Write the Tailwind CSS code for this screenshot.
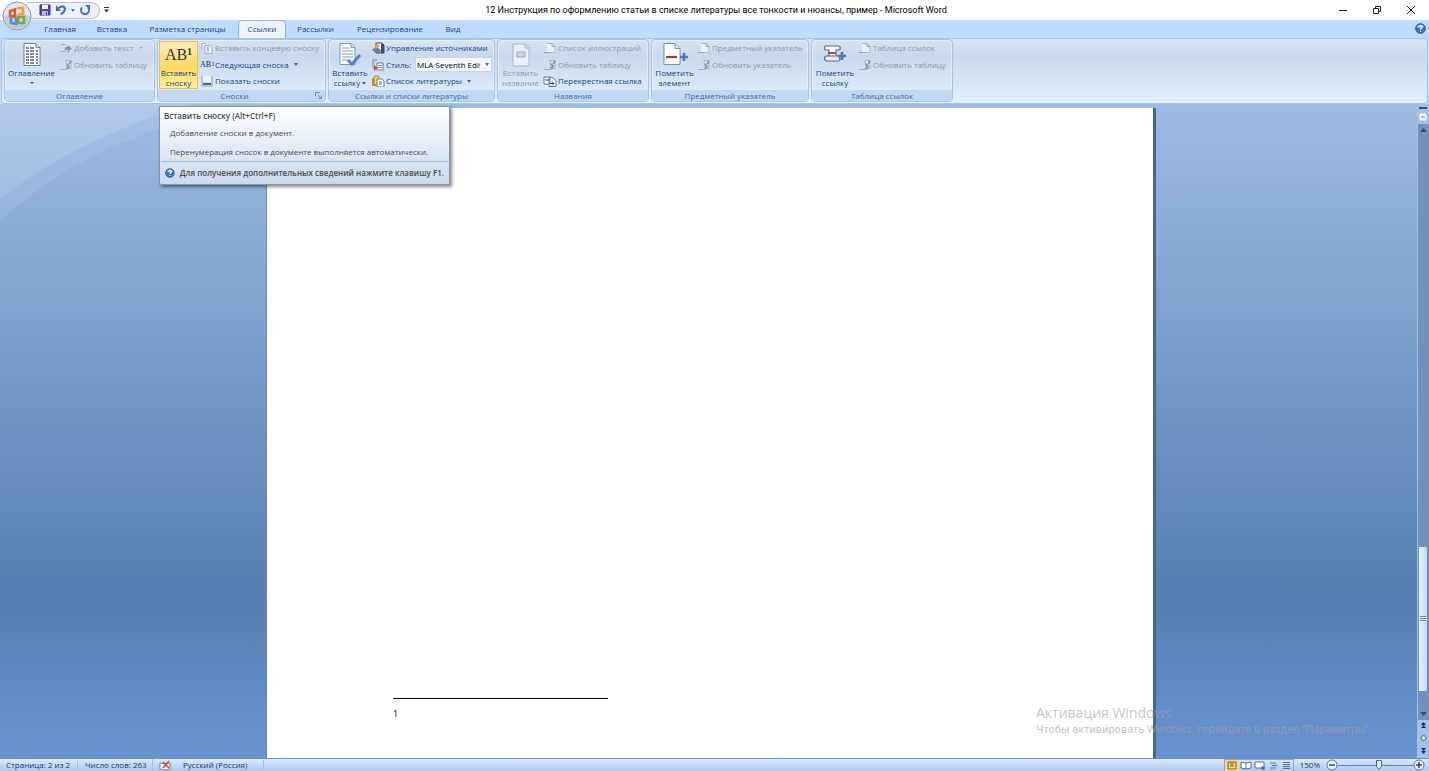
<!DOCTYPE html>
<html lang="ru">
<head>
<meta charset="utf-8">
<title>12 Инструкция - Microsoft Word</title>
<script src="https://cdn.jsdelivr.net/npm/@tailwindcss/browser@4"></script>
</head>
<body class="relative flex h-screen flex-col overflow-hidden bg-[#bfdbff] font-['Open_Sans','Noto_Sans',sans-serif] text-[8px] leading-[10px] text-[#15428b]">
<svg class="hidden">
  <defs>
    <symbol id="i-toc" viewBox="0 0 24 26"><path d="M4 1.500h12l4 4v18H4z" fill="#fff" stroke="#71819b"/><path d="M16 1.500v4h4" fill="#dbe5f2" stroke="#71819b"/><path d="M6 6h3M10 6h4M6 9h3M10 9h4M6 12h3M10 12h4M6 15h3M10 15h4M6 18h3M10 18h4M6 21h3M10 21h4M16 9h2M16 12h2M16 15h2M16 18h2M16 21h2" stroke="#53657f" stroke-width="1.300"/></symbol>
    <symbol id="i-add" viewBox="0 0 14 12"><path d="M1 9.500h5M2 2.500h5l2 2M6 6v4h4" fill="none" stroke="#a3b0c4"/><path d="M6 5h3V3l4 3.500L9 10V8H6z" fill="#8795ab"/></symbol>
    <symbol id="i-upd" viewBox="0 0 14 12"><path d="M1 10.500h7M7 1.500h5v8H8z" fill="#dce5f1" stroke="#a3b0c4"/><path d="M8 10l2-3-2-2M10 5l2-3" fill="none" stroke="#7f8da4" stroke-width="1.500"/></symbol>
    <symbol id="i-end" viewBox="0 0 14 12"><path d="M2 8V1.500h4M5 3.500h5l2 2v6H5z" fill="#eaf0f8" stroke="#a0aec3"/><path d="M8 5v5M7 6h1" stroke="#8090a8"/></symbol>
    <symbol id="i-bar" viewBox="0 0 14 12"><path d="M2 1h10v10H2z" fill="#edf3fb"/><path d="M2 1v10h10V1" fill="none" stroke="#8797b4"/><path d="M3 7h8v3H3z" fill="#c7cfe0"/><path d="M3 9h8" stroke="#38466e" stroke-width="1.500"/></symbol>
    <symbol id="i-cite" viewBox="0 0 24 26"><path d="M2 1.500h11l4 4v17H2z" fill="#f8fbff" stroke="#8395b0"/><path d="M13 1.500v4h4M4 6h7M4 9h11M4 12h11M4 15h11M4 18h7" fill="none" stroke="#8c9bb4"/><path d="M10 18l4 4 8-9" fill="none" stroke="#4f87cb" stroke-width="3"/></symbol>
    <symbol id="i-src" viewBox="0 0 14 12"><path d="M5 1h6l2 2v8H5z" fill="#eef3fb" stroke="#3d4a68"/><path d="M10 2h3v9h-3z" fill="#3d4a68"/><path d="M2 7l5-5 2 2-5 5z" fill="#e9a83b"/><path d="M1 7l3 4h5l2-2-4-3z" fill="#6d7fa1"/></symbol>
    <symbol id="i-style" viewBox="0 0 14 12"><path d="M2 1v8h3M2 1h4" fill="none" stroke="#7888a5"/><path d="M6 4h6v7H6z" fill="#fff" stroke="#66799b"/><path d="M7 6.500h4M7 8.500h4" stroke="#7f8fac"/><path d="M3 6l4 3-4 3z" fill="#d14f36"/></symbol>
    <symbol id="i-bib" viewBox="0 0 14 12"><path d="M1 3h4v8H1z" fill="#cb8e34"/><path d="M3 1h5v9H3z" fill="#f2c55f" stroke="#97691f" stroke-width=".6"/><path d="M6 4h5l2 2v6H6z" fill="#fff" stroke="#6c80a3"/><path d="M8 7h3M8 9h3" stroke="#526b99"/></symbol>
    <symbol id="i-cap" viewBox="0 0 24 26"><path d="M4 2h12l4 4v18H4z" fill="#e9f0f9" stroke="#a9b8cd"/><path d="M16 2v4h4" fill="none" stroke="#a9b8cd"/><path d="M8 10h8v5H8z" fill="#cbd5e4" stroke="#9dadc4"/></symbol>
    <symbol id="i-list" viewBox="0 0 14 12"><path d="M4 1.500h5l3 2.500v6.500H4" fill="#eaf0f8" stroke="#aab7ca"/><path d="M1 10.500h6M9 1.500v3h3" fill="none" stroke="#98a6bc"/></symbol>
    <symbol id="i-cross" viewBox="0 0 14 12"><path d="M1 2h6v7H1zM6 2.500h4l3 3v6H6z" fill="#fff" stroke="#65789e"/><path d="M3 4v2M5 4v2" stroke="#354d80"/><path d="M7 8.500h4M9 6.500l2 2-2 2" fill="none" stroke="#354d80"/></symbol>
    <symbol id="i-mark" viewBox="0 0 28 26"><path d="M3 1.500h11l5 5v16H3z" fill="#fff" stroke="#7a8eac"/><path d="M14 1.500v5h5" fill="#d6e2f2" stroke="#7a8eac"/><path d="M5 15h11" stroke="#ad3526" stroke-width="2.200"/><path d="M19 15h8M23 11v8" stroke="#4d73b8" stroke-width="2.600"/></symbol>
    <symbol id="i-auth" viewBox="0 0 28 26"><path d="M5 4h12c3 0 3 4 0 4h-2v9H8V8H5c-2 0-2-4 0-4z" fill="#fff" stroke="#596a88" stroke-width="1.200"/><path d="M7 11h8" stroke="#c4482f" stroke-width="2"/><path d="M5 14h12c2 0 3 5 0 5H6c-3 0-3-5-1-5z" fill="#e6ecf5" stroke="#596a88" stroke-width="1.200"/><path d="M17 14h8M21 10v8" stroke="#4d73b8" stroke-width="2.600"/></symbol>
    <symbol id="i-help" viewBox="0 0 12 12"><circle cx="6" cy="6" r="5.300" fill="#3f74cc" stroke="#254f9c"/><path d="M2 4.500a4.300 4.300 0 0 1 8 0q-4 2-8 0" fill="#89b2ee"/><path d="M4.300 4.700c0-2.500 3.600-2.200 3.400-.1C7.600 5.800 6 5.800 6 7.200M6 8.500v1.200" fill="none" stroke="#fff" stroke-width="1.300"/></symbol>
  </defs>
</svg>

<!-- Title bar -->
<header class="flex h-5 shrink-0 items-center bg-white pr-[13px] text-black">
  <div class="ml-7 flex h-[17px] w-[72px] items-center gap-1 rounded-r-full border border-l-0 border-[#b3bfd4] bg-[#eef2fb] pl-[11px]">
    <button aria-label="Сохранить"><svg class="size-3" viewBox="0 0 12 12"><path d="M1 1h10v10H1z" fill="#4b4ba4" stroke="#34347f"/><path d="M3 1h6v4H3z" fill="#eef0ff"/><path d="M3 7h6v4H3z" fill="#b8bce2"/><path d="M7 8h1v3H7z" fill="#34347f"/></svg></button>
    <button aria-label="Отменить"><svg class="size-3" viewBox="0 0 12 12"><path d="M3 4.500c4-4 8-2 6.500 2C9 8.500 7 9 6 10.500" fill="none" stroke="#3f6fc1" stroke-width="2.200"/><path d="M1 1v6h5z" fill="#3f6fc1"/></svg></button>
    <svg class="h-[3px] w-1" viewBox="0 0 4 3"><path d="M0 0h4L2 3z" fill="#56719f"/></svg>
    <button aria-label="Повторить"><svg class="size-3" viewBox="0 0 12 12"><path d="M3 3.500a4 4 0 1 0 6 0" fill="none" stroke="#3f6fc1" stroke-width="2"/><path d="M6 1h5v5z" fill="#3f6fc1"/></svg></button>
  </div>
  <button aria-label="Настройка панели" class="ml-1"><svg class="h-[6px] w-[5px]" viewBox="0 0 5 6"><path d="M0 .500h5" stroke="#333"/><path d="M0 2.500h5L2.500 5.500z" fill="#333"/></svg></button>
  <h1 class="grow pr-[15px] text-center font-[Roboto,sans-serif] text-[9px] whitespace-nowrap">12 Инструкция по оформлению статьи в списке литературы все тонкости и нюансы, пример - Microsoft Word</h1>
  <div class="flex items-center gap-6">
    <button aria-label="Свернуть"><svg class="size-[10px]" viewBox="0 0 10 10"><path d="M1 5.500h8" stroke="#222"/></svg></button>
    <button aria-label="Восстановить"><svg class="size-[10px]" viewBox="0 0 10 10"><path d="M1.500 3.500h5v5h-5zM3.500 3V1.500h5v5H7" fill="none" stroke="#222"/></svg></button>
    <button aria-label="Закрыть"><svg class="size-[10px]" viewBox="0 0 10 10"><path d="M1 1l8 8M9 1L1 9" stroke="#222"/></svg></button>
  </div>
</header>
<button aria-label="Кнопка Office" class="absolute top-0 left-[2px] z-10"><svg class="size-8" viewBox="0 0 32 32"><circle cx="15" cy="16" r="14" fill="#e3e8f0" stroke="#8b99b0"/><path d="M2 16a13 13 0 0 0 26 0q-13-4-26 0" fill="#c3cedd"/><g fill="none" stroke-width="2.600"><path d="M13 9.500l-5 1.500v5l5 .5z" stroke="#dc5b2b"/><path d="M15 8h6v6h-5" stroke="#ee9b2f"/><path d="M9 17v6l5 1v-6" stroke="#5a8ed1"/><path d="M16 17h6v6h-6z" stroke="#74a84b"/></g></svg></button>

<!-- Tabs -->
<nav class="flex h-[18px] shrink-0 items-end pr-[3px] pl-[33px]">
  <button class="h-[18px] w-[54px] pb-px">Главная</button>
  <button class="h-[18px] w-[50px] pb-px">Вставка</button>
  <button class="h-[18px] w-[101px] pb-px">Разметка страницы</button>
  <button class="h-[18px] w-[48px] rounded-t-sm border border-b-0 border-[#8db2e3] bg-[#ebf3fd] pb-px">Ссылки</button>
  <button class="h-[18px] w-[59px] pb-px">Рассылки</button>
  <button class="h-[18px] w-[90px] pb-px">Рецензирование</button>
  <button class="h-[18px] w-[36px] pb-px">Вид</button>
  <button aria-label="Справка" class="mb-1 ml-auto"><svg class="size-[11px]"><use href="#i-help"/></svg></button>
</nav>

<!-- Ribbon -->
<section class="mx-px flex h-[66px] shrink-0 gap-[2px] rounded-sm border border-[#a5c3e8] bg-linear-to-b from-[#dbe5f2] from-0% via-[#c8d8ed] via-25% to-[#e3f1fe] px-[2px] pb-px whitespace-nowrap">
  <div class="flex w-[151px] flex-col rounded-sm border border-[#a9c5e6] shadow-[inset_0_0_0_1px_#ffffff66]">
    <div class="flex grow">
      <button class="flex w-[54px] flex-col items-center pt-[2px] pr-px"><svg class="h-[26px] w-6"><use href="#i-toc"/></svg><span>Оглавление</span><svg class="mt-1 h-[2px] w-1" viewBox="0 0 4 2"><path d="M0 0h4L2 2z" fill="#46669a"/></svg></button>
      <div class="flex flex-col text-[#8d98aa]">
        <button class="flex h-4 items-center gap-px" disabled><svg class="h-3 w-[14px]"><use href="#i-add"/></svg>Добавить текст<svg class="ml-1 h-[2px] w-1" viewBox="0 0 4 2"><path d="M0 0h4L2 2z" fill="#a0abba"/></svg></button>
        <button class="flex h-[17px] items-center gap-px" disabled><svg class="h-3 w-[14px]"><use href="#i-upd"/></svg>Обновить таблицу</button>
      </div>
    </div>
    <div class="h-[11px] bg-[#c1d8f1] text-center leading-3 text-[#3e6aaa]">Оглавление</div>
  </div>
  <div class="flex w-[169px] flex-col rounded-sm border border-[#a9c5e6] shadow-[inset_0_0_0_1px_#ffffff66]">
    <div class="flex grow">
      <button class="mt-px ml-px flex h-[48px] w-[39px] flex-col items-center justify-end border border-[#e0bd68] bg-linear-to-b from-[#fdeab3] via-[#ffd95a] via-55% to-[#fff09a]"><span class="mb-[3px] flex items-start font-['Liberation_Serif',serif] text-[16px] leading-5 text-[#2c3345]">AB<span class="text-[10px] leading-[14px] font-bold">1</span></span><span>Вставить</span><span>сноску</span></button>
      <div class="flex flex-col pl-[2px]">
        <button class="flex h-4 items-center gap-px text-[#8d98aa]" disabled><svg class="h-3 w-[14px]"><use href="#i-end"/></svg>Вставить концевую сноску</button>
        <button class="flex h-[17px] items-center gap-px"><span class="flex w-[14px] items-start font-['Liberation_Serif',serif] text-[8px] text-[#222f52]">AB<span class="text-[7px] leading-[8px]">1</span></span>Следующая сноска<svg class="ml-1 h-[3px] w-1" viewBox="0 0 4 3"><path d="M0 0h4L2 3z" fill="#46669a"/></svg></button>
        <button class="flex h-4 items-center gap-px"><svg class="h-3 w-[14px]"><use href="#i-bar"/></svg>Показать сноски</button>
      </div>
    </div>
    <div class="flex h-[11px] items-center bg-[#c1d8f1] pr-[3px] text-[#3e6aaa]"><span class="grow pr-1 text-center">Сноски</span><button aria-label="Параметры сносок"><svg class="size-[7px]" viewBox="0 0 7 7"><path d="M.5 4V.5H5M3 3l3 3M6.500 3.500v3h-3" fill="none" stroke="#6c8cbb"/></svg></button></div>
  </div>
  <div class="flex w-[167px] flex-col rounded-sm border border-[#a9c5e6] shadow-[inset_0_0_0_1px_#ffffff66]">
    <div class="flex grow">
      <button class="flex w-[42px] flex-col items-center pt-[2px]"><svg class="h-[26px] w-6"><use href="#i-cite"/></svg><span>Вставить</span><span class="flex items-center gap-[2px]">ссылку<svg class="h-[3px] w-1" viewBox="0 0 4 3"><path d="M0 0h4L2 3z" fill="#46669a"/></svg></span></button>
      <div class="flex flex-col">
        <button class="flex h-4 items-center gap-px"><svg class="h-3 w-[14px]"><use href="#i-src"/></svg>Управление источниками</button>
        <div class="flex h-[17px] items-center gap-px"><svg class="h-3 w-[14px]"><use href="#i-style"/></svg><label for="style" class="w-7">Стиль:</label>
          <div class="relative flex items-center"><select id="style" class="h-[15px] w-[77px] appearance-none border border-[#c3d5ee] bg-[#f5f9ff] pr-[11px] pl-px text-black"><option>MLA Seventh Edition</option></select><svg class="pointer-events-none absolute right-[3px] h-[3px] w-1" viewBox="0 0 4 3"><path d="M0 0h4L2 3z" fill="#46669a"/></svg></div></div>
        <button class="flex h-4 items-center gap-px"><svg class="h-3 w-[14px]"><use href="#i-bib"/></svg>Список литературы<svg class="ml-1 h-[3px] w-1" viewBox="0 0 4 3"><path d="M0 0h4L2 3z" fill="#46669a"/></svg></button>
      </div>
    </div>
    <div class="h-[11px] bg-[#c1d8f1] text-center leading-3 text-[#3e6aaa]">Ссылки и списки литературы</div>
  </div>
  <div class="flex w-[152px] flex-col rounded-sm border border-[#a9c5e6] shadow-[inset_0_0_0_1px_#ffffff66]">
    <div class="flex grow">
      <button class="flex w-[45px] flex-col items-center pt-[2px] text-[#8d98aa]" disabled><svg class="h-[26px] w-6"><use href="#i-cap"/></svg><span>Вставить</span><span>название</span></button>
      <div class="flex flex-col">
        <button class="flex h-4 items-center gap-px text-[#8d98aa]" disabled><svg class="h-3 w-[14px]"><use href="#i-list"/></svg>Список иллюстраций</button>
        <button class="flex h-[17px] items-center gap-px text-[#8d98aa]" disabled><svg class="h-3 w-[14px]"><use href="#i-upd"/></svg>Обновить таблицу</button>
        <button class="flex h-4 items-center gap-px"><svg class="h-3 w-[14px]"><use href="#i-cross"/></svg>Перекрестная ссылка</button>
      </div>
    </div>
    <div class="h-[11px] bg-[#c1d8f1] text-center leading-3 text-[#3e6aaa]">Названия</div>
  </div>
  <div class="flex w-[158px] flex-col rounded-sm border border-[#a9c5e6] shadow-[inset_0_0_0_1px_#ffffff66]">
    <div class="flex grow">
      <button class="flex w-[45px] flex-col items-center pt-[2px]"><svg class="h-[26px] w-7"><use href="#i-mark"/></svg><span>Пометить</span><span>элемент</span></button>
      <div class="flex flex-col text-[#8d98aa]">
        <button class="flex h-4 items-center gap-px" disabled><svg class="h-3 w-[14px]"><use href="#i-list"/></svg>Предметный указатель</button>
        <button class="flex h-[17px] items-center gap-px" disabled><svg class="h-3 w-[14px]"><use href="#i-upd"/></svg>Обновить указатель</button>
      </div>
    </div>
    <div class="h-[11px] bg-[#c1d8f1] text-center leading-3 text-[#3e6aaa]">Предметный указатель</div>
  </div>
  <div class="flex w-[142px] flex-col rounded-sm border border-[#a9c5e6] shadow-[inset_0_0_0_1px_#ffffff66]">
    <div class="flex grow">
      <button class="flex w-[46px] flex-col items-center pt-[2px]"><svg class="h-[26px] w-7"><use href="#i-auth"/></svg><span>Пометить</span><span>ссылку</span></button>
      <div class="flex flex-col text-[#8d98aa]">
        <button class="flex h-4 items-center gap-px" disabled><svg class="h-3 w-[14px]"><use href="#i-list"/></svg>Таблица ссылок</button>
        <button class="flex h-[17px] items-center gap-px" disabled><svg class="h-3 w-[14px]"><use href="#i-upd"/></svg>Обновить таблицу</button>
      </div>
    </div>
    <div class="h-[11px] bg-[#c1d8f1] text-center leading-3 text-[#3e6aaa]">Таблица ссылок</div>
  </div>
</section>

<!-- Workspace -->
<main class="relative flex min-h-0 grow bg-linear-to-b from-[#9dbbe4] via-[#557fb2] via-75% to-[#6993d0]">
  <svg class="absolute top-0 left-0 h-[120px] w-[270px]" viewBox="0 0 270 120"><path d="M0 0h270C150 15 60 60 0 118z" fill="#fff" opacity=".09"/><path d="M0 96C45 58 100 30 190 0H0z" fill="#fff" opacity=".12"/></svg>
  <div class="relative flex grow justify-center pt-1 pl-[2px]">
    <article class="flex w-[887px] flex-col justify-end border-l border-[#6f8db8] bg-white pb-[39px] pl-[126px] text-black shadow-[3px_0_0_#4a6690]">
      <hr class="w-[215px] border-black">
      <p class="mt-[10px] text-[9px]">1</p>
    </article>
  </div>
  <aside class="relative flex w-3 flex-col items-center bg-[#a3c0e8]">
    <div class="mt-[3px] h-[2px] w-2 bg-[#35517f]"></div>
    <svg class="mt-1 size-2" viewBox="0 0 8 8"><path d="M1 1h5l1 1v5H1z" fill="#e8f1fc" stroke="#fff"/><path d="M2 4h4" stroke="#6e8ebd"/></svg>
    <div class="mt-[3px] flex w-[11px] grow flex-col items-center bg-[#7391bd] pt-1 pb-1">
      <svg class="h-1 w-[7px]" viewBox="0 0 7 4"><path d="M0 4h7L3.500 0z" fill="#2f4e80"/></svg>
      <div class="grow-[418]"></div>
      <div class="flex w-[10px] grow-[141] flex-col items-center justify-center gap-px border border-[#718db9] bg-linear-to-r from-[#edf4fd] to-[#c3d6f0]"><i class="h-px w-[6px] bg-[#6f86aa]"></i><i class="h-px w-[6px] bg-[#6f86aa]"></i><i class="h-px w-[6px] bg-[#6f86aa]"></i></div>
      <div class="grow-[20]"></div>
      <svg class="h-1 w-[7px]" viewBox="0 0 7 4"><path d="M0 0h7L3.500 4z" fill="#2f4e80"/></svg>
    </div>
    <svg class="h-[38px] w-3" viewBox="0 0 12 38"><path d="M4 5h5L6.500 2zM4 8h5L6.500 5zM4 28h5L6.500 31zM4 31h5L6.500 34z" fill="#182f55"/><path d="M6.500 15l3 3-3 3-3-3z" fill="#d7ead5" stroke="#3d5a5c"/></svg>
  </aside>
  <div class="pointer-events-none absolute right-[57px] bottom-[21px] w-[336px] font-[Roboto,sans-serif] whitespace-nowrap text-[#a0a4aa]/65"><p class="font-['Open_Sans',sans-serif] text-[14px] leading-[18px]">Активация Windows</p><p class="text-[11px] leading-[15px]">Чтобы активировать Windows, перейдите в раздел "Параметры".</p></div>
</main>

<!-- Status bar -->
<footer class="flex h-[13px] shrink-0 items-center border-t border-[#6d93c9] bg-linear-to-b from-[#dce9fa] to-[#acc8ef] pr-1 pl-[6px] whitespace-nowrap text-[#1b3666]">
  <span class="w-[71px]">Страница: 2 из 2</span>
  <span class="w-[75px] border-l border-[#a3bfe2] pl-[7px]">Число слов: 263</span>
  <span class="border-l border-[#a3bfe2] pl-[6px]"><svg class="size-3" viewBox="0 0 12 12"><path d="M1 4l5 1 5-1v6l-5 1-5-1z" fill="#fff" stroke="#7183a5"/><path d="M4 3l6 6M10 2L4 9" stroke="#d34a39" stroke-width="1.700"/></svg></span>
  <span class="mr-auto ml-3 border-r border-[#a3bfe2] pr-4">Русский (Россия)</span>
  <div class="flex items-center border border-[#86a5d1]">
    <button aria-label="Разметка страницы" class="bg-[#fbd98a]"><svg class="h-[11px] w-[14px]" viewBox="0 0 14 11"><path d="M3 2h8v7H3zM5 4h4M5 6h4" fill="none" stroke="#7a5b28"/></svg></button>
    <button aria-label="Режим чтения"><svg class="h-[11px] w-[14px]" viewBox="0 0 14 11"><path d="M2 2l5 1 5-1v6L7 9 2 8zM7 3v6" fill="#fff" stroke="#5c7093"/></svg></button>
    <button aria-label="Веб-документ"><svg class="h-[11px] w-[14px]" viewBox="0 0 14 11"><path d="M2 2h9v6H2z" fill="#fff" stroke="#5c7093"/><circle cx="10" cy="8" r="2" fill="#4d76b5"/></svg></button>
    <button aria-label="Структура"><svg class="h-[11px] w-[13px]" viewBox="0 0 13 11"><path d="M3 3h6M5 5.500h5M3 8h6" stroke="#5c7093"/></svg></button>
    <button aria-label="Черновик"><svg class="h-[11px] w-[13px]" viewBox="0 0 13 11"><path d="M3 2.500h7M3 4.500h7M3 6.500h7M3 8.500h7" stroke="#5c7093"/></svg></button>
  </div>
  <span class="mr-[6px] ml-[6px]">150%</span>
  <button aria-label="Уменьшить"><svg class="size-3" viewBox="0 0 12 12"><circle cx="6" cy="6" r="5" fill="#eef5fe" stroke="#52719f"/><path d="M3 6h6" stroke="#28497c" stroke-width="1.500"/></svg></button>
  <div class="relative flex h-[11px] w-[75px] items-center justify-center"><i class="absolute h-px w-full bg-[#5d7fb3]"></i><svg class="relative ml-[6px] h-[10px] w-[6px]" viewBox="0 0 6 10"><path d="M.5.500h5v6L3 9.500.5 6.500z" fill="#eaf3fe" stroke="#45638f"/></svg></div>
  <button aria-label="Увеличить"><svg class="size-3" viewBox="0 0 12 12"><circle cx="6" cy="6" r="5" fill="#eef5fe" stroke="#52719f"/><path d="M3 6h6M6 3v6" stroke="#28497c" stroke-width="1.500"/></svg></button>
</footer>

<!-- Tooltip -->
<div role="tooltip" class="absolute top-[106px] left-[159px] z-20 w-[291px] border border-[#8894a8] bg-linear-to-b from-white to-[#c9d9ef] whitespace-nowrap text-[#4c4c4c] shadow-[2px_2px_3px_#00000077]">
  <p class="px-1 pt-1 font-semibold">Вставить сноску (Alt+Ctrl+F)</p>
  <p class="mt-[7px] px-[10px]">Добавление сноски в документ.</p>
  <p class="mt-[9px] px-[10px]">Перенумерация сносок в документе выполняется автоматически.</p>
  <p class="mx-px mt-1 flex items-center gap-[5px] border-t border-[#a8b9d2] px-1 py-[6px] font-semibold"><svg class="size-[10px]"><use href="#i-help"/></svg>Для получения дополнительных сведений нажмите клавишу F1.</p>
</div>
</body>
</html>
